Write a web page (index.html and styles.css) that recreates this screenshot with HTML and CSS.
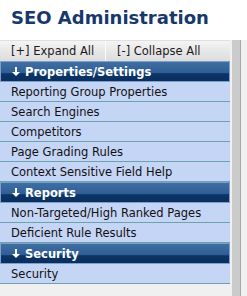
FILE: index.html
```html
<!DOCTYPE html>
<html lang="en">
<head>
  <meta charset="UTF-8">
  <meta name="viewport" content="width=device-width, initial-scale=1.0">
  <title>SEO Administration</title>
  <link rel="stylesheet" href="styles.css">
</head>
<body>

  <h1 class="title">SEO Administration</h1>

  <div class="panel">
    <div class="menu">
      <div class="toolbar">
        <span class="tool">[+] Expand All</span>
        <span class="tool">[-] Collapse All</span>
      </div>

      <div class="group-head">
        <svg class="arrow" width="8" height="9" viewBox="0 0 8 9"><path d="M3 0h2v5h3L4 9 0 5h3z" fill="#fff"/></svg>
        Properties/Settings
      </div>
      <div class="item">Reporting Group Properties</div>
      <div class="item">Search Engines</div>
      <div class="item">Competitors</div>
      <div class="item">Page Grading Rules</div>
      <div class="item">Context Sensitive Field Help</div>

      <div class="group-head">
        <svg class="arrow" width="8" height="9" viewBox="0 0 8 9"><path d="M3 0h2v5h3L4 9 0 5h3z" fill="#fff"/></svg>
        Reports
      </div>
      <div class="item">Non-Targeted/High Ranked Pages</div>
      <div class="item">Deficient Rule Results</div>

      <div class="group-head">
        <svg class="arrow" width="8" height="9" viewBox="0 0 8 9"><path d="M3 0h2v5h3L4 9 0 5h3z" fill="#fff"/></svg>
        Security
      </div>
      <div class="item">Security</div>
    </div>
    <div class="scroll"></div>
  </div>

</body>
</html>
```

FILE: styles.css
```css
body {
  margin: 0;
  background-color: #fff;
  font-family: "DejaVu Sans", Verdana, sans-serif;
}

.title {
  margin: 0;
  height: 40px;
  padding: 7px 0 0 11px;
  box-sizing: border-box;
  font-size: 18px;
  font-weight: bold;
  color: #17386b;
}

.panel {
  display: flex;
  min-height: 256px;
  background-color: #f0f0f0;
}

.menu {
  width: 230px;
}

.toolbar {
  display: flex;
  height: 21px;
  border-top: 1px solid #e0e0e0;
  box-sizing: border-box;
  background: linear-gradient(#f4f4f4, #dcdcdc);
  font-size: 11.5px;
  color: #1a1a1a;
}

.tool {
  padding: 3px 0 0 11px;
}

.tool:first-child {
  width: 94px;
  border-right: 1px solid #fafafa;
}

.group-head {
  display: flex;
  align-items: center;
  height: 21px;
  box-sizing: border-box;
  padding-left: 11px;
  border: 1px solid #7d9fcc;
  background: linear-gradient(#3f6ea3 0%, #2f5f95 55%, #0c3466 62%, #0a2f5f 100%);
  color: #fff;
  font-size: 11.5px;
  font-weight: bold;
}

.arrow {
  margin-right: 5px;
}

.item {
  height: 20px;
  box-sizing: border-box;
  padding: 3px 0 0 11px;
  border-bottom: 1px solid #6ba2ab;
  background-color: #c5d5f6;
  font-size: 11.5px;
  color: #111;
}

.scroll {
  width: 8px;
  margin-left: 2px;
  background-color: #cbcbcb;
  border-right: 1px solid #a8a8a8;
}
```
